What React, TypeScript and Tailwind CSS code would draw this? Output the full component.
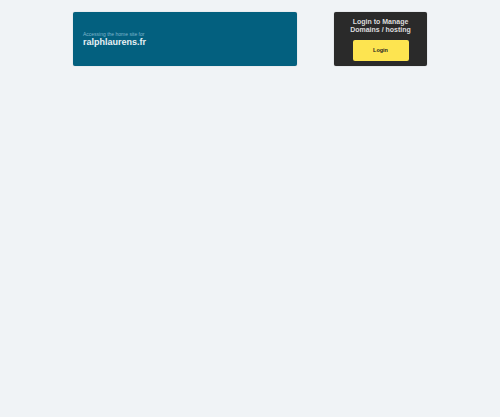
export default function App() {
  return (
    <div className="min-h-[417px] w-full bg-[#f0f3f6] font-['Liberation_Sans',Arial,sans-serif]">
      <div className="flex items-start gap-[37px] pl-[73px] pt-[12px]">
        {/* domain banner */}
        <div className="flex h-[54px] w-[224px] flex-col justify-center rounded-[2px] bg-[#03607f] px-[10px] shadow-[0_0_1px_rgba(0,0,0,0.3)]">
          <div className="text-[5px] leading-[6px] text-[#7fb6cc]">Accessing the home site for</div>
          <div className="text-[9px] font-bold leading-[11px] text-[#e8f1f5]">ralphlaurens.fr</div>
        </div>

        {/* login box */}
        <div className="flex h-[54px] w-[93px] flex-col items-center rounded-[2px] bg-[#2a2a2a] pt-[6px] shadow-[0_0_1px_rgba(0,0,0,0.4)]">
          <div className="text-center text-[7px] font-bold leading-[8px] text-[#dcdcdc]">
            Login to Manage
            <br />
            Domains / hosting
          </div>
          <button className="mt-[6px] h-[21px] w-[56px] rounded-[2px] bg-[#fde450] text-[5.5px] font-bold text-[#1e1e1e]">
            Login
          </button>
        </div>
      </div>
    </div>
  )
}
